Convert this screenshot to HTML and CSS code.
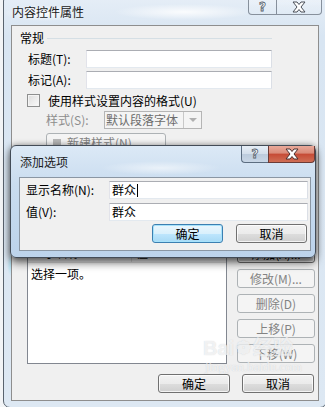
FILE: index.html
```html
<!DOCTYPE html>
<html lang="zh-CN">
<head>
<meta charset="utf-8">
<title>内容控件属性</title>
<link rel="stylesheet" href="styles.css">
</head>
<body>
<div class="desktop">
  <div class="win outer">
    <div class="caption">
      <span class="title">内容控件属性</span>
      <div class="capbtns">
        <span class="cb help">?</span>
        <span class="cb close"><svg width="16" height="12" viewBox="0 0 16 12"><path d="M2 1h4l2 2.5L10 1h4l-4 5 4 5h-4l-2-2.5L6 11H2l4-5z" fill="#fff" stroke="#4a4f58" stroke-width="1"/></svg></span>
      </div>
    </div>
    <div class="client">
      <div class="grp-head"><span>常规</span><i class="rule"></i></div>
      <div class="field r1"><label>标题(T):</label><div class="input"></div></div>
      <div class="field r2"><label>标记(A):</label><div class="input"></div></div>
      <div class="check-row"><span class="checkbox"></span><span>使用样式设置内容的格式(U)</span></div>
      <div class="style-row"><label>样式(S):</label><div class="select"><span class="sel-text">默认段落字体</span><span class="sel-arrow"><i></i></span></div></div>
      <div class="btn disabled newstyle"><span class="ns-icon"></span>新建样式(N)...</div>
      <div class="lower">
        <div class="list">
          <div class="list-head"><span>显示名称</span><span>值</span></div>
          <div class="list-item">选择一项。</div>
        </div>
        <div class="side">
          <div class="btn">添加(A)...</div>
          <div class="btn disabled">修改(M)...</div>
          <div class="btn disabled">删除(D)</div>
          <div class="btn disabled">上移(P)</div>
          <div class="btn disabled">下移(W)</div>
        </div>
      </div>
      <div class="bottom-row">
        <div class="btn wide">确定</div>
        <div class="btn wide">取消</div>
      </div>
    </div>
  </div>

  <div class="win inner">
    <div class="caption small">
      <span class="title">添加选项</span>
      <div class="capbtns">
        <span class="cb help active">?</span>
        <span class="cb close red"><svg width="16" height="12" viewBox="0 0 16 12"><path d="M2 1h4l2 2.5L10 1h4l-4 5 4 5h-4l-2-2.5L6 11H2l4-5z" fill="#fff" stroke="#4a3030" stroke-width="1"/></svg></span>
      </div>
    </div>
    <div class="client iclient">
      <div class="ifield f1"><label>显示名称(N):</label><div class="input"><span>群众</span><i class="caret"></i></div></div>
      <div class="ifield f2"><label>值(V):</label><div class="input"><span>群众</span></div></div>
      <div class="ibtns">
        <div class="btn ib focus">确定</div>
        <div class="btn ib">取消</div>
      </div>
    </div>
  </div>

  <div class="watermark">
    <div class="wm1">Bai<span class="paw">❁</span>经验</div>
    <div class="wm2">jingyan.baidu.com</div>
  </div>
</div>
</body>
</html>
```

FILE: styles.css
```css
body {
  margin: 0;
}

.desktop {
  position: relative;
  width: 325px;
  height: 407px;
  overflow: hidden;
  background: #f2f4f6;
  font-family: "Noto Sans CJK SC", "Liberation Sans", sans-serif;
  font-size: 12px;
  line-height: 16px;
  color: #000;
}

.win {
  box-sizing: border-box;
  display: flex;
  flex-direction: column;
}

/* ---------- outer window ---------- */
.outer {
  position: absolute;
  left: 3px;
  top: -6px;
  width: 324px;
  height: 414px;
  border: 1px solid #59636e;
  border-radius: 7px;
  padding: 0 7px 6px 7px;
  background:
    radial-gradient(ellipse 40px 8px at 40px 18px, rgba(255,255,255,0.9), rgba(255,255,255,0)),
    radial-gradient(ellipse 70px 8px at 180px 17px, rgba(255,255,255,0.85), rgba(255,255,255,0)),
    radial-gradient(ellipse 5px 12px at 8px 270px, rgba(150,220,240,0.8), rgba(150,220,240,0)),
    linear-gradient(180deg, #e6eef7 0%, #d8e5f2 10%, #dde8f3 100%);
}

.caption {
  display: flex;
  align-items: flex-start;
  height: 30px;
  flex: none;
}

.title {
  margin-top: 9px;
  padding-left: 1px;
  color: #1b1b1b;
}

.capbtns {
  margin-left: auto;
  margin-right: -3px;
  display: flex;
}

.cb {
  box-sizing: border-box;
  height: 20px;
  display: flex;
  align-items: center;
  justify-content: center;
  border: 1px solid rgba(70, 80, 95, 0.6);
  border-top: none;
  background: linear-gradient(180deg, rgba(255,255,255,0.35), rgba(225,235,245,0.5));
}

.cb.help {
  width: 28px;
  border-bottom-left-radius: 4px;
  border-right: none;
  font-family: "DejaVu Sans", sans-serif;
  font-weight: bold;
  font-size: 12px;
  line-height: 12px;
  color: #fff;
  -webkit-text-stroke: 0.8px #55606c;
  padding-top: 4px;
}

.cb.close {
  width: 46px;
  border-bottom-right-radius: 4px;
  padding-top: 4px;
}

.client {
  box-sizing: border-box;
  width: 308px;
  height: 376px;
  background: #f0f0f0;
  border: 1px solid #8e8e8e;
  flex: none;
}

.grp-head {
  display: flex;
  align-items: center;
  height: 16px;
  margin: 4px 46px 0 8px;
}

.rule {
  flex: 1;
  height: 1px;
  background: #d5dfe5;
  margin-left: 3px;
}

.field {
  display: flex;
  align-items: center;
  height: 18px;
  margin-left: 16px;
}

.field label {
  width: 58px;
}

.field .input {
  width: 186px;
}

.r1 { margin-top: 4px; }
.r2 { margin-top: 3px; }

.input {
  box-sizing: border-box;
  height: 18px;
  background: #fff;
  border: 1px solid;
  border-color: #abadb3 #dbdfe6 #e3e9ef #e2e3ea;
  display: flex;
  align-items: center;
  padding-left: 2px;
}

.check-row {
  display: flex;
  align-items: center;
  height: 13px;
  margin: 5px 0 0 15px;
}

.checkbox {
  box-sizing: border-box;
  width: 13px;
  height: 13px;
  border: 1px solid #8e8f8f;
  background: linear-gradient(135deg, #dcdcdc, #fbfbfb);
  box-shadow: inset 0 0 0 1px #f4f4f4;
  margin-right: 8px;
}

.style-row {
  display: flex;
  align-items: center;
  height: 18px;
  margin: 4px 0 0 34px;
  color: #8d8d8d;
}

.style-row label {
  width: 58px;
}

.select {
  box-sizing: border-box;
  width: 98px;
  height: 18px;
  border: 1px solid #b5b5b5;
  background: #f4f4f4;
  display: flex;
}

.sel-text {
  flex: 1;
  padding-left: 1px;
  color: #6d6d6d;
  line-height: 16px;
}

.sel-arrow {
  width: 17px;
  border-left: 1px solid #c8c8c8;
  display: flex;
  align-items: center;
  justify-content: center;
}

.sel-arrow i {
  width: 0;
  height: 0;
  border-left: 4px solid transparent;
  border-right: 4px solid transparent;
  border-top: 4px solid #b0b0b0;
}

.btn {
  box-sizing: border-box;
  height: 19px;
  border: 1px solid #707070;
  border-radius: 3px;
  background: linear-gradient(180deg, #f2f2f2 0%, #ebebeb 50%, #dddddd 51%, #cfcfcf 100%);
  box-shadow: inset 0 0 0 1px rgba(255,255,255,0.75);
  display: flex;
  align-items: center;
  justify-content: center;
  font-size: 12px;
  white-space: nowrap;
}

.btn.disabled {
  border-color: #adb2b5;
  background: #f4f4f4;
  box-shadow: none;
  color: #838383;
}

.btn.focus {
  border-color: #3c7fb1;
  box-shadow: inset 0 0 0 1px #a6e2fb;
  background: linear-gradient(180deg, #eaf6fd 0%, #d9f0fc 50%, #bee6fd 51%, #a7d9f5 100%);
}

.newstyle {
  width: 120px;
  margin: 4px 0 0 34px;
  justify-content: flex-start;
  padding-left: 6px;
}

.ns-icon {
  width: 8px;
  height: 8px;
  background: #b8b8b8;
  margin-right: 6px;
}

.lower {
  display: flex;
  margin: 92px 0 0 15px;
}

.list {
  box-sizing: border-box;
  width: 200px;
  height: 120px;
  border: 1px solid #828790;
  background: #fff;
}

.list-head {
  display: grid;
  grid-template-columns: 104px 1fr;
  height: 17px;
  border-bottom: 1px solid #e3e3e3;
  background: linear-gradient(#ffffff, #f4f5f6);
}

.list-head span {
  padding-left: 4px;
}

.list-head span:first-child {
  border-right: 1px solid #dcdcdc;
}

.list-item {
  padding: 3px 0 0 3px;
}

.side {
  display: flex;
  flex-direction: column;
  gap: 6px;
  margin-left: 10px;
  width: 78px;
}

.bottom-row {
  display: flex;
  justify-content: flex-end;
  gap: 12px;
  margin: 10px 4px 0 0;
}

.btn.wide {
  width: 72px;
}

/* ---------- inner dialog ---------- */
.inner {
  position: absolute;
  left: 10px;
  top: 145px;
  width: 306px;
  height: 113px;
  border: 1px solid #434c57;
  border-radius: 6px;
  padding: 0 4px 6px 8px;
  background:
    radial-gradient(ellipse 60px 7px at 150px 22px, rgba(255,255,255,0.55), rgba(255,255,255,0)),
    linear-gradient(180deg, #dce9f6 0%, #c9dcef 35%, #bcd3eb 100%);
  box-shadow: 0 5px 9px rgba(0,0,0,0.55), 0 0 6px rgba(0,0,0,0.35);
}

.caption.small {
  height: 31px;
}

.caption.small .title {
  margin-top: 8px;
  padding-left: 1px;
}

.caption.small .capbtns {
  margin-right: -4px;
}

.caption.small .cb {
  height: 17px;
  padding-top: 0;
}

.caption.small .cb.help {
  width: 27px;
  background: linear-gradient(180deg, #e6eef6 0%, #d3deea 50%, #bccbdc 51%, #c9d7e6 100%);
  border-color: #5c6d80;
}

.caption.small .cb.close {
  width: 47px;
}

.cb.red {
  background: linear-gradient(180deg, #e9a99a 0%, #d98b79 45%, #c64a35 50%, #cf6e55 100%);
  border-color: #6b3b36;
}

.iclient {
  width: 292px;
  height: 74px;
  border-color: #8a96a3;
}

.ifield {
  display: flex;
  align-items: center;
  height: 18px;
  padding-left: 6px;
}

.ifield label {
  width: 83px;
}

.ifield .input {
  width: 199px;
}

.f1 { margin-top: 3px; }
.f2 { margin-top: 4px; }

.caret {
  width: 1px;
  height: 13px;
  background: #000;
  margin-left: 1px;
}

.ibtns {
  display: flex;
  justify-content: flex-end;
  gap: 13px;
  margin: 3px 3px 0 0;
}

.btn.ib {
  width: 71px;
}

/* ---------- watermark ---------- */
.watermark {
  position: absolute;
  left: 203px;
  top: 336px;
  width: 100px;
  color: rgba(255,255,255,0.7);
  text-shadow: 0 0 1px rgba(120,130,140,0.35);
  pointer-events: none;
}

.wm1 {
  font-family: "Liberation Sans", sans-serif;
  font-weight: bold;
  font-size: 20px;
  line-height: 24px;
  display: flex;
  align-items: center;
}

.wm1 .paw {
  font-size: 18px;
  margin: 0 2px;
}

.wm2 {
  font-family: "Liberation Serif", serif;
  font-size: 13px;
  line-height: 14px;
  padding-left: 2px;
}
```
